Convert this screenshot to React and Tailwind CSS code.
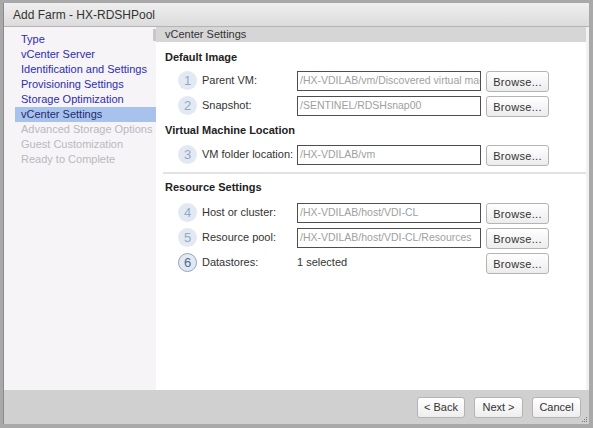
import React from 'react'

const steps = [
  { label: 'Type', state: 'done' },
  { label: 'vCenter Server', state: 'done' },
  { label: 'Identification and Settings', state: 'done' },
  { label: 'Provisioning Settings', state: 'done' },
  { label: 'Storage Optimization', state: 'done' },
  { label: 'vCenter Settings', state: 'active' },
  { label: 'Advanced Storage Options', state: 'off' },
  { label: 'Guest Customization', state: 'off' },
  { label: 'Ready to Complete', state: 'off' },
]

const StepCircle = ({ n, active }) => (
  <div
    className={
      active
        ? 'w-[19px] h-[19px] shrink-0 rounded-full bg-[#e3e9f2] border-[1.5px] border-[#8fa6c6] flex items-center justify-center text-[13px] text-[#4d6a94]'
        : 'w-[19px] h-[19px] shrink-0 rounded-full bg-[#e3e9f2] flex items-center justify-center text-[13px] text-[#93a8c6]'
    }
  >
    {n}
  </div>
)

const BrowseButton = () => (
  <button className="w-[63px] h-[21px] rounded-[3px] border border-[#b4b4b4] bg-gradient-to-b from-white to-[#ececec] text-[11px] text-[#333] tracking-[0.3px]">
    Browse...
  </button>
)

const Row = ({ n, label, value, active, plain }) => (
  <div className="flex items-center h-[25px] pl-[13px]">
    <StepCircle n={n} active={active} />
    <div className="w-[100px] shrink-0 pl-[5px] whitespace-nowrap text-[11px] text-[#333]">{label}</div>
    {plain ? (
      <div className="w-[184px] shrink-0 text-[11px] text-[#333]">{value}</div>
    ) : (
      <div className="w-[184px] h-[20px] shrink-0 border-[1.5px] border-[#4e4e4e] bg-white flex items-center px-[2px] overflow-hidden whitespace-nowrap text-[10.5px] text-[#a0a0a0]">
        {value}
      </div>
    )}
    <div className="ml-[5px]">
      <BrowseButton />
    </div>
  </div>
)

const FooterButton = ({ children, className }) => (
  <button
    className={
      'h-[21px] rounded-[3px] border border-[#b4b4b4] bg-gradient-to-b from-white to-[#eeeeee] text-[11px] text-[#333] ' +
      className
    }
  >
    {children}
  </button>
)

export default function App() {
  return (
    <div
      className="w-[593px] h-[428px] bg-[#a9a9a9] pt-[3px] pl-[3px] pr-[4px] pb-[4px]"
      style={{ fontFamily: '"Liberation Sans", Arial, sans-serif' }}
    >
      <div className="w-full h-full flex flex-col border-l border-[#8a8a8a] bg-[#d0d0d0]">
        {/* title bar */}
        <div className="h-[24px] shrink-0 bg-gradient-to-b from-[#efefef] to-[#dcdcdc] border-b border-[#b4b4b4] flex items-center pl-[9px] pt-[1px] text-[12px] text-[#333]">
          Add Farm - HX-RDSHPool
        </div>

        <div className="flex h-[363px] shrink-0">
          {/* wizard steps */}
          <div className="w-[152px] shrink-0 bg-[#f6f4f7] pt-[5px] relative">
            <div className="absolute right-0 top-[2px] w-[3px] h-[12px] bg-[#c8c8c8]" />
            {steps.map((s) => (
              <div
                key={s.label}
                className={
                  s.state === 'active'
                    ? 'ml-[11px] h-[15px] flex items-center pl-[6px] bg-[#a8c2ee] text-[11px] text-[#1e2a6e]'
                    : s.state === 'done'
                      ? 'ml-[11px] h-[15px] flex items-center pl-[6px] text-[11px] text-[#2d2db0]'
                      : 'ml-[11px] h-[15px] flex items-center pl-[6px] text-[11px] text-[#b9b9bd]'
                }
              >
                {s.label}
              </div>
            ))}
          </div>

          {/* content */}
          <div className="flex-1 bg-white border-r-[3px] border-[#f2f2f2]">
            <div className="h-[15px] bg-[#d6d6d6] flex items-center pl-[9px] text-[11px] text-[#333]">
              vCenter Settings
            </div>
            <div className="pl-[9px] pt-[8px]">
              <div className="text-[11px] font-bold text-[#222] h-[15px] flex items-center">Default Image</div>
              <div className="pt-[3px]">
                <Row n="1" label="Parent VM:" value="/HX-VDILAB/vm/Discovered virtual mac" />
                <Row n="2" label="Snapshot:" value="/SENTINEL/RDSHsnap00" />
              </div>
              <div className="text-[11px] font-bold text-[#222] h-[15px] flex items-center mt-[5px]">
                Virtual Machine Location
              </div>
              <div className="pt-[4px]">
                <Row n="3" label="VM folder location:" value="/HX-VDILAB/vm" />
              </div>
            </div>
            <div className="h-[2px] bg-[#e2e2e2] ml-[7px] mt-[5px]" />
            <div className="pl-[9px] pt-[6px]">
              <div className="text-[11px] font-bold text-[#222] h-[15px] flex items-center">Resource Settings</div>
              <div className="pt-[5px]">
                <Row n="4" label="Host or cluster:" value="/HX-VDILAB/host/VDI-CL" />
                <Row n="5" label="Resource pool:" value="/HX-VDILAB/host/VDI-CL/Resources" />
                <Row n="6" label="Datastores:" value="1 selected" active plain />
              </div>
            </div>
          </div>
        </div>

        {/* footer */}
        <div className="flex-1 relative flex justify-end items-start pt-[7px] pr-[8px] gap-[9px]">
          <FooterButton className="w-[48px]">&lt; Back</FooterButton>
          <FooterButton className="w-[49px]">Next &gt;</FooterButton>
          <FooterButton className="w-[49px]">Cancel</FooterButton>
          <div className="absolute right-[2px] bottom-[2px] grid grid-cols-3 gap-[1px]">
            <span className="w-[1px] h-[1px]" />
            <span className="w-[1px] h-[1px]" />
            <span className="w-[1px] h-[1px] bg-[#777]" />
            <span className="w-[1px] h-[1px]" />
            <span className="w-[1px] h-[1px] bg-[#777]" />
            <span className="w-[1px] h-[1px] bg-[#777]" />
            <span className="w-[1px] h-[1px] bg-[#777]" />
            <span className="w-[1px] h-[1px] bg-[#777]" />
            <span className="w-[1px] h-[1px] bg-[#777]" />
          </div>
        </div>
      </div>
    </div>
  )
}
